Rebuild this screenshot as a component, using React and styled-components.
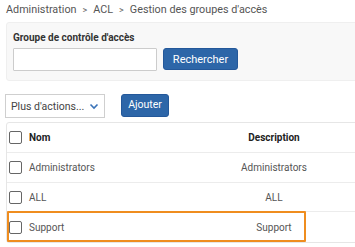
import React from "react";
import styled, { createGlobalStyle } from "styled-components";

const Global = createGlobalStyle`
  html, body { margin: 0; padding: 0; background: #fff; overflow: hidden; }
  body { font-family: Roboto, "Liberation Sans", Arial, sans-serif; }
  * { box-sizing: border-box; }
`;

const Page = styled.div`
  width: 380px;
  padding: 3px 0 0 6px;
  display: flex;
  flex-direction: column;
`;

const Breadcrumb = styled.div`
  display: flex;
  align-items: center;
  gap: 6px;
  font-size: 10.8px;
  color: #555;
  height: 14px;
  line-height: 14px;
  white-space: nowrap;
`;

const Sep = styled.span`
  font-size: 9px;
  color: #666;
`;

const SearchPanel = styled.div`
  margin-top: 5px;
  height: 59px;
  background: #f8f8f8;
  border: 1px solid #efefef;
  border-radius: 3px;
  padding: 9px 0 0 6px;
  display: flex;
  flex-direction: column;
`;

const Label = styled.div`
  font-size: 10px;
  font-weight: 700;
  color: #333;
  line-height: 12px;
  height: 16px;
`;

const SearchRow = styled.div`
  display: flex;
  align-items: flex-start;
  gap: 6px;
`;

const Input = styled.input`
  width: 144px;
  height: 23px;
  border: 1px solid #ccc;
  background: #fff;
  border-radius: 1px;
  padding: 0 4px;
  outline: none;
`;

const Button = styled.button`
  width: ${(p) => p.$w}px;
  height: ${(p) => p.$h || 22}px;
  padding: 0;
  background: #2d66a8;
  border: 1px solid #24589a;
  border-radius: 3px;
  color: #fff;
  font-family: inherit;
  font-size: ${(p) => p.$fs || 11}px;
  line-height: 1;
  display: flex;
  align-items: center;
  justify-content: center;
  white-space: nowrap;
`;

const ActionsRow = styled.div`
  margin-top: 13px;
  margin-left: -1px;
  display: flex;
  align-items: flex-start;
  gap: 16px;
`;

const Select = styled.div`
  width: 100px;
  height: 24px;
  border: 1px solid #cfcfcf;
  background: #fff;
  display: flex;
  align-items: center;
  justify-content: space-between;
  padding: 0 5px 0 5px;
  font-size: 10.5px;
  color: #444;
  white-space: nowrap;
`;

const Table = styled.div`
  margin-top: 4px;
  width: 352px;
  border: 1px solid #e6e6e6;
  border-radius: 3px;
  display: flex;
  flex-direction: column;
`;

const Row = styled.div`
  position: relative;
  display: grid;
  grid-template-columns: 183px 168px;
  align-items: center;
  height: ${(p) => p.$h || 30}px;
  border-bottom: ${(p) => (p.$last ? "none" : "1px solid #ececec")};
  font-size: 10px;
  font-weight: ${(p) => (p.$head ? 700 : 400)};
  color: ${(p) => (p.$head ? "#222" : "#555")};
`;

const NameCell = styled.div`
  display: flex;
  align-items: center;
  gap: 7px;
  padding-left: 2px;
`;

const DescCell = styled.div`
  text-align: center;
`;

const Check = styled.span`
  width: 13px;
  height: 13px;
  border: 1.5px solid #666;
  border-radius: 2px;
  background: #fff;
  display: inline-block;
`;

const Highlight = styled.div`
  position: absolute;
  left: 0;
  top: -1px;
  width: 299px;
  height: 31px;
  border: 2px solid #ef8d1f;
  border-radius: 1px;
  pointer-events: none;
`;

const Chevron = () => (
  <svg width="10" height="7" viewBox="0 0 10 7">
    <path d="M1.5 1.5 L5 5 L8.5 1.5" fill="none" stroke="#3a73b8" strokeWidth="1.6" />
  </svg>
);

const rows = [
  { name: "Administrators", desc: "Administrators", h: 30 },
  { name: "ALL", desc: "ALL", h: 29 },
  { name: "Support", desc: "Support", h: 30, hl: true },
];

export default function App() {
  return (
    <>
      <Global />
      <Page>
        <Breadcrumb>
          <span>Administration</span>
          <Sep>&gt;</Sep>
          <span>ACL</span>
          <Sep>&gt;</Sep>
          <span>Gestion des groupes d'accès</span>
        </Breadcrumb>
        <SearchPanel>
          <Label>Groupe de contrôle d'accès</Label>
          <SearchRow>
            <Input />
            <Button $w={75} $h={22} $fs={11}>Rechercher</Button>
          </SearchRow>
        </SearchPanel>
        <ActionsRow>
          <Select>
            <span>Plus d'actions...</span>
            <Chevron />
          </Select>
          <Button $w={48} $h={23} $fs={10.5}>Ajouter</Button>
        </ActionsRow>
        <Table>
          <Row $head $h={30}>
            <NameCell>
              <Check />
              <span>Nom</span>
            </NameCell>
            <DescCell>Description</DescCell>
          </Row>
          {rows.map((r, i) => (
            <Row key={r.name} $h={r.h} $last={i === rows.length - 1}>
              <NameCell>
                <Check />
                <span>{r.name}</span>
              </NameCell>
              <DescCell>{r.desc}</DescCell>
              {r.hl && <Highlight />}
            </Row>
          ))}
        </Table>
      </Page>
    </>
  );
}
